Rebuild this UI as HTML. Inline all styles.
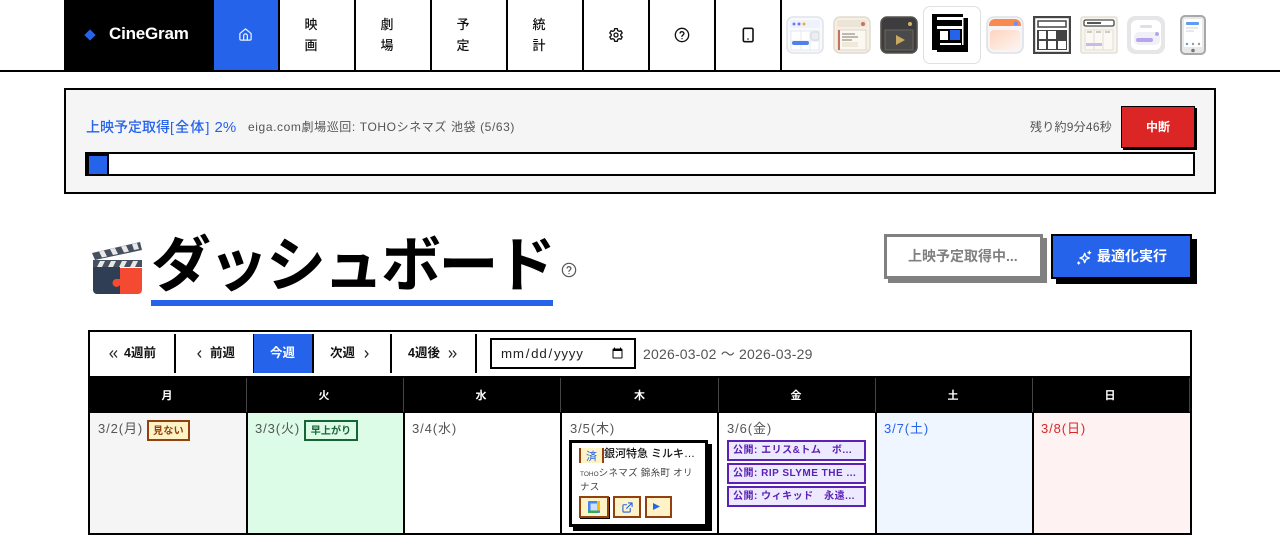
<!DOCTYPE html>
<html lang="ja"><head><meta charset="utf-8"><title>CineGram</title>
<style>
*{box-sizing:border-box}
html,body{margin:0;padding:0;width:1280px;height:535px;overflow:hidden;background:#fff}
body{position:relative;font-family:"Liberation Sans","Noto Sans CJK JP",sans-serif;color:#000}
.a{position:absolute}
.t{position:absolute;white-space:nowrap;line-height:1}
.c{display:flex;align-items:center;justify-content:center;position:absolute}
.sep{position:absolute;background:#000}
.nv{position:absolute;top:0;height:70px;text-align:center;font-size:13px;font-weight:500;line-height:21px;padding-top:14px;color:#111}
svg{display:block;position:absolute}
.ev{position:absolute;left:727px;width:139px;height:21px;border:2px solid #5b21b6;background:#ede9fe;color:#5b21b6;font-size:10px;font-weight:700;letter-spacing:.5px;line-height:17px;padding-left:4px;white-space:nowrap;overflow:hidden}
.ib{position:absolute;top:496px;height:22px;border:2px solid #92400e;background:#fef3c7}
.dt{position:absolute;top:422px;font-size:13px;line-height:14px;color:#555;letter-spacing:.9px;white-space:nowrap}
.hd{position:absolute;top:376px;height:37px;color:#fff;font-size:11px;font-weight:700;display:flex;align-items:center;justify-content:center}
.tb{position:absolute;top:347px;line-height:13px;font-size:12.5px;font-weight:700;color:#111;white-space:nowrap}
input::-webkit-datetime-edit{letter-spacing:.75px}
</style></head><body>

<!-- NAV -->
<div class="a" style="left:0;top:70px;width:1280px;height:2px;background:#000"></div>
<div class="a" style="left:64px;top:0;width:150px;height:70px;background:#000"></div>
<div class="a" style="left:86px;top:31px;width:8px;height:8px;background:#2563eb;transform:rotate(45deg)"></div>
<div class="t" style="left:109px;top:25px;font-size:17px;font-weight:700;color:#fff;letter-spacing:-.2px">CineGram</div>
<div class="a" style="left:214px;top:0;width:64px;height:70px;background:#2563eb"></div>
<svg style="left:238px;top:27px" width="15" height="15" viewBox="0 0 24 24" fill="none" stroke="#fff" stroke-width="2" stroke-linecap="round" stroke-linejoin="round" opacity=".9"><path d="M3 10.500 12 3l9 7.500V19a2 2 0 0 1-2 2H5a2 2 0 0 1-2-2z"/><path d="M9 21v-7a3 3 0 0 1 6 0v7"/></svg>
<div class="sep" style="left:278px;top:0;width:2px;height:70px"></div>
<div class="nv" style="left:280px;width:62px">映<br>画</div>
<div class="sep" style="left:354px;top:0;width:2px;height:70px"></div>
<div class="nv" style="left:356px;width:62px">劇<br>場</div>
<div class="sep" style="left:430px;top:0;width:2px;height:70px"></div>
<div class="nv" style="left:432px;width:62px">予<br>定</div>
<div class="sep" style="left:506px;top:0;width:2px;height:70px"></div>
<div class="nv" style="left:508px;width:62px">統<br>計</div>
<div class="sep" style="left:582px;top:0;width:2px;height:70px"></div>
<svg style="left:608px;top:27px" width="16" height="16" viewBox="0 0 24 24" fill="none" stroke="#111" stroke-width="2" stroke-linejoin="round"><path d="M10 2.500h4l.6 2.900 1.900 1.100 2.800-.9 2 3.400-2.200 2v2l2.200 2-2 3.400-2.800-.9-1.900 1.100-.6 2.900h-4l-.6-2.900-1.900-1.100-2.800.9-2-3.400 2.200-2v-2l-2.200-2 2-3.400 2.800.9 1.900-1.100z"/><circle cx="12" cy="12" r="3"/></svg>
<div class="sep" style="left:648px;top:0;width:2px;height:70px"></div>
<svg style="left:674px;top:27px" width="16" height="16" viewBox="0 0 24 24" fill="none" stroke="#111" stroke-width="2" stroke-linecap="round"><circle cx="12" cy="12" r="10"/><path d="M9.100 9a3 3 0 0 1 5.800 1c0 2-3 2.500-3 4"/><path d="M12 17.500h.01"/></svg>
<div class="sep" style="left:714px;top:0;width:2px;height:70px"></div>
<svg style="left:740px;top:27px" width="16" height="16" viewBox="0 0 24 24" fill="none" stroke="#111" stroke-width="2.400" stroke-linecap="round"><rect x="5" y="2" width="14.500" height="20" rx="2"/><path d="M12 18h.01"/></svg>
<div class="sep" style="left:780px;top:0;width:2px;height:70px"></div>

<!-- THEME ICONS -->
<svg style="left:786px;top:16px" width="38" height="38" viewBox="0 0 38 38"><rect x="1" y="1" width="36" height="36" rx="6" fill="#f7f9fd" stroke="#e1e4ea" stroke-width="1.600"/><rect x="4" y="4" width="30" height="8" rx="2" fill="#eef2fd"/><circle cx="8" cy="8" r="1.500" fill="#6d7ff0"/><circle cx="13" cy="8" r="1.500" fill="#7c6ee8"/><circle cx="18" cy="8" r="1.500" fill="#f5a83c"/><rect x="5" y="15" width="28" height="19" fill="#fff" stroke="#e6e8ee"/><path d="M15 15v19M5 25h28M24 15v19" stroke="#e6e8ee"/><rect x="25" y="16" width="8" height="8" rx="2" fill="#eceef2" stroke="#d5d8de"/><rect x="6" y="25" width="17" height="4" rx="2" fill="#4f80ec"/></svg>
<svg style="left:833px;top:16px" width="38" height="38" viewBox="0 0 38 38"><rect x="1" y="1" width="36" height="36" rx="6" fill="#f5efe4" stroke="#e2dccf" stroke-width="1.600"/><rect x="4" y="4" width="30" height="7" rx="2" fill="#ece4d6"/><circle cx="30" cy="8" r="2" fill="#c9705f"/><rect x="5" y="14" width="28" height="20" fill="#fbf8f1" stroke="#ddd6c8"/><rect x="5" y="14" width="2" height="20" fill="#c9705f"/><path d="M9 18h13M9 21h16M9 24h10" stroke="#9b9488" stroke-width="1.200"/><rect x="9" y="26" width="16" height="5" fill="#efe9dc"/></svg>
<svg style="left:880px;top:16px" width="38" height="38" viewBox="0 0 38 38"><rect x="1" y="1" width="36" height="36" rx="6" fill="#3d3d40" stroke="#56534d" stroke-width="1.600"/><circle cx="30" cy="8" r="2" fill="#d4b469"/><rect x="5" y="14" width="28" height="20" fill="#4a4a4b" stroke="#6b675f"/><path d="M16 19l9 5-9 5z" fill="#c9a95f"/></svg>
<div class="a" style="left:923px;top:6px;width:58px;height:58px;border:1px solid #e0e0e0;border-radius:7px;background:#fff"></div>
<svg style="left:932px;top:14px" width="37" height="38" viewBox="0 0 37 38"><rect x="0" y="0" width="31" height="36" fill="#000"/><rect x="5" y="4" width="31" height="34" fill="#000"/><rect x="5" y="3" width="25" height="3" fill="#fff"/><rect x="5" y="12" width="25" height="3" fill="#fff"/><rect x="30" y="3" width="1.500" height="28" fill="#fff"/><rect x="8" y="17" width="8" height="9" fill="#fff"/><rect x="18" y="16" width="10" height="10" fill="#2563eb"/><rect x="8" y="29" width="21" height="2" fill="#fff"/></svg>
<svg style="left:986px;top:16px" width="38" height="38" viewBox="0 0 38 38"><defs><linearGradient id="g1" x1="0" y1="0" x2="1" y2="1"><stop offset="0" stop-color="#fdd4c0"/><stop offset="1" stop-color="#fdf5f0"/></linearGradient></defs><rect x="1" y="1" width="36" height="36" rx="7" fill="#f5f5f7" stroke="#dfe1e6" stroke-width="1.600"/><path d="M3 9a6 6 0 0 1 6-6h20a6 6 0 0 1 6 6v1H3z" fill="#f98a50"/><circle cx="30" cy="7.500" r="2.200" fill="#6d93ef"/><rect x="4" y="14" width="30" height="20" rx="4" fill="url(#g1)"/></svg>
<svg style="left:1033px;top:16px" width="38" height="38" viewBox="0 0 38 38"><rect x="1" y="1" width="36" height="36" fill="#fff" stroke="#444" stroke-width="2.400"/><rect x="5" y="5" width="28" height="6" fill="#fff" stroke="#444" stroke-width="1.500"/><rect x="4" y="14" width="30" height="20" fill="#444"/><rect x="6" y="15" width="7" height="8" fill="#fff"/><rect x="15" y="15" width="8" height="8" fill="#fff"/><rect x="25" y="15" width="8" height="8" fill="#444"/><rect x="6" y="25" width="7" height="8" fill="#fff"/><rect x="15" y="25" width="8" height="8" fill="#fff"/><rect x="25" y="25" width="8" height="8" fill="#fff"/></svg>
<svg style="left:1080px;top:16px" width="38" height="38" viewBox="0 0 38 38"><rect x="1" y="1" width="36" height="36" rx="2" fill="#f7f5ee" stroke="#e3e0d6" stroke-width="1.600"/><rect x="4" y="4" width="30" height="6" rx="1.500" fill="#fff" stroke="#4a4a4a" stroke-width="1.300"/><rect x="7" y="6" width="14" height="2" fill="#555"/><rect x="5" y="14" width="28" height="20" fill="#faf9f4" stroke="#e3e0d6"/><path d="M14 14v20M23 14v20" stroke="#e0ddd3"/><path d="M7 16h5M16 16h5M25 16h5" stroke="#bdbab0" stroke-width="1.500"/><rect x="6" y="27" width="16" height="3" fill="#c4bde8"/></svg>
<svg style="left:1127px;top:16px" width="38" height="38" viewBox="0 0 38 38"><rect x="0" y="0" width="38" height="38" rx="8" fill="#e6e6e9"/><rect x="4" y="4" width="30" height="30" rx="6" fill="#fff"/><rect x="13" y="9" width="12" height="3" rx="1.500" fill="#e0e0e4"/><rect x="7" y="16" width="26" height="13" rx="5" fill="#f1f0f6"/><rect x="9" y="22" width="17" height="4" rx="2" fill="#b8a4ec"/><circle cx="30" cy="18" r="2" fill="#b8a4ec"/></svg>
<svg style="left:1180px;top:15px" width="26" height="40" viewBox="0 0 26 40"><rect x="1" y="1" width="24" height="38" rx="4" fill="#e8e8e8" stroke="#a8a8a8" stroke-width="2"/><rect x="4" y="4" width="18" height="28" fill="#fff"/><rect x="6" y="7" width="13" height="3" rx="1" fill="#5f9bf0"/><path d="M6 13h12M6 16h8" stroke="#d8dbe0" stroke-width="1.300"/><circle cx="7" cy="29" r="1.200" fill="#5f9bf0"/><circle cx="13" cy="29" r="1.200" fill="#999"/><circle cx="19" cy="29" r="1.200" fill="#999"/><circle cx="13" cy="35.500" r="1.800" fill="#777"/></svg>

<!-- PROGRESS -->
<div class="a" style="left:64px;top:88px;width:1152px;height:106px;border:2px solid #000;background:#f5f5f5"></div>
<div class="t" style="left:86px;top:120px;font-size:14px;font-weight:500;color:#2563eb">上映予定取得<span style="letter-spacing:1.200px">[全体]</span> <span style="font-size:15px">2%</span></div>
<div class="t" style="left:248px;top:121px;font-size:12px;color:#555;letter-spacing:.6px">eiga.com劇場巡回: TOHOシネマズ 池袋 (5/63)</div>
<div class="t" style="left:1030px;top:121px;font-size:12px;color:#555;letter-spacing:.25px">残り約9分46秒</div>
<div class="a" style="left:1121px;top:106px;width:74px;height:42px;background:#dc2626;border:1px solid #000;box-shadow:2px 2px 0 #000"></div>
<div class="c" style="left:1121px;top:105px;width:74px;height:42px;color:#fff;font-size:12px;font-weight:700">中断</div>
<div class="a" style="left:85px;top:152px;width:1110px;height:24px;border:2px solid #000;background:#fff"></div>
<div class="a" style="left:87px;top:154px;width:22px;height:20px;border:2px solid #000;border-bottom:0;background:#2563eb"></div>

<!-- TITLE -->
<svg style="left:91px;top:241px" width="54" height="55" viewBox="0 0 54 55"><path d="M1 12 49 1l2 8L4 19z" fill="#46505f"/><path d="M8 10.500l5-1 3 6-5 1zM19 8l5-1 3 6-5 1zM30 5.500l5-1 3 6-5 1zM41 3l5-1 2 6-5 1z" fill="#e8e8e8"/><rect x="2" y="19" width="49" height="7" fill="#46505f"/><path d="M6 26l3-6h5l-3 6zM17 26l3-6h5l-3 6zM28 26l3-6h5l-3 6zM39 26l3-6h5l-3 6z" fill="#e8e8e8"/><path d="M2 26h27v12a5 5 0 0 0 0 6v9H6a4 4 0 0 1-4-4z" fill="#2f3d55"/><path d="M29 27h22v22a4 4 0 0 1-4 4H29v-9a4 4 0 1 1-3-6l3 0z" fill="#f44a32"/></svg>
<div class="t" style="left:151px;top:223px;font-size:60px;font-weight:700;letter-spacing:-2.500px;line-height:76px;font-family:'Noto Sans CJK JP',sans-serif">ダッシュボード</div>
<div class="a" style="left:151px;top:300px;width:402px;height:6px;background:#2563eb"></div>
<svg style="left:561px;top:262px" width="16" height="16" viewBox="0 0 24 24" fill="none" stroke="#555" stroke-width="1.800" stroke-linecap="round"><circle cx="12" cy="12" r="10"/><path d="M9.100 9a3 3 0 0 1 5.800 1c0 2-3 2.500-3 4"/><path d="M12 17.500h.01"/></svg>

<div class="a" style="left:884px;top:234px;width:159px;height:45px;border:3px solid #808080;background:#fff;box-shadow:4px 4px 0 #808080"></div>
<div class="t" style="left:908px;top:249px;color:#808080;font-size:14px;font-weight:700">上映予定取得中...</div>
<div class="a" style="left:1051px;top:234px;width:141px;height:45px;border:2px solid #000;background:#2563eb;box-shadow:5px 5px 0 #000"></div>
<svg style="left:1076px;top:250px" width="16" height="16" viewBox="0 0 24 24" fill="none" stroke="#fff" stroke-width="2" stroke-linecap="round" stroke-linejoin="round"><path d="M13 5l2 5 5 2-5 2-2 5-2-5-5-2 5-2z"/><path d="M20 2v4M18 4h4M4 18v3M2.500 19.500h3"/></svg>
<div class="t" style="left:1097px;top:249px;font-size:14px;font-weight:700;color:#fff">最適化実行</div>

<!-- CALENDAR -->
<div class="a" style="left:88px;top:330px;width:1104px;height:205px;border:2px solid #000;border-bottom:0;background:#fff"></div>
<div class="a" style="left:90px;top:413px;width:156px;height:120px;background:#f5f5f5"></div>
<div class="a" style="left:248px;top:413px;width:155px;height:120px;background:#dcfce7"></div>
<div class="a" style="left:877px;top:413px;width:155px;height:120px;background:#eff6ff"></div>
<div class="a" style="left:1034px;top:413px;width:156px;height:120px;background:#fef2f2"></div>
<div class="sep" style="left:246px;top:413px;width:2px;height:122px"></div>
<div class="sep" style="left:403px;top:413px;width:2px;height:122px"></div>
<div class="sep" style="left:560px;top:413px;width:2px;height:122px"></div>
<div class="sep" style="left:717px;top:413px;width:2px;height:122px"></div>
<div class="sep" style="left:875px;top:413px;width:2px;height:122px"></div>
<div class="sep" style="left:1032px;top:413px;width:2px;height:122px"></div>
<div class="sep" style="left:88px;top:533px;width:1104px;height:2px"></div>

<svg style="left:109px;top:350px" width="9" height="8" viewBox="0 0 9 8" fill="none" stroke="#222" stroke-width="1.200"><path d="M4 .5 1 4l3 3.500M8 .5 5 4l3 3.500"/></svg>
<div class="tb" style="left:124px">4週前</div>
<div class="sep" style="left:174px;top:334px;width:2px;height:39px"></div>
<svg style="left:197px;top:350px" width="5" height="8" viewBox="0 0 5 8" fill="none" stroke="#222" stroke-width="1.300"><path d="M4 .5 1 4l3 3.500"/></svg>
<div class="tb" style="left:210px">前週</div>
<div class="a" style="left:253px;top:334px;width:61px;height:39px;background:#2563eb;border-left:1px solid #000;border-right:2px solid #000"></div>
<div class="tb" style="left:270px;color:#fff">今週</div>
<div class="tb" style="left:330px">次週</div>
<svg style="left:364px;top:350px" width="5" height="8" viewBox="0 0 5 8" fill="none" stroke="#222" stroke-width="1.300"><path d="M1 .5 4 4 1 7.500"/></svg>
<div class="sep" style="left:390px;top:334px;width:2px;height:39px"></div>
<div class="tb" style="left:408px">4週後</div>
<svg style="left:448px;top:350px" width="9" height="8" viewBox="0 0 9 8" fill="none" stroke="#222" stroke-width="1.200"><path d="M1 .5 4 4 1 7.500M5 .5 8 4 5 7.500"/></svg>
<div class="sep" style="left:475px;top:334px;width:2px;height:39px"></div>
<input type="date" style="position:absolute;left:490px;top:338px;width:146px;height:31px;border:2px solid #000;background:#fff;padding:0 8px;font:13.333px 'Liberation Sans',sans-serif;color:#222;border-radius:0;outline:0">
<div class="t" style="left:643px;top:347px;font-size:14px;color:#555;letter-spacing:.2px">2026-03-02 〜 2026-03-29</div>

<div class="a" style="left:90px;top:376px;width:1100px;height:37px;background:#000"></div>
<div class="a" style="left:88px;top:376px;width:1104px;height:2px;background:#000"></div>
<div class="hd" style="left:89px;width:156px">月</div>
<div class="hd" style="left:246px;width:156px">火</div>
<div class="hd" style="left:403px;width:156px">水</div>
<div class="hd" style="left:561px;width:157px">木</div>
<div class="hd" style="left:718px;width:156px">金</div>
<div class="hd" style="left:875px;width:156px">土</div>
<div class="hd" style="left:1032px;width:156px">日</div>
<div class="a" style="left:246px;top:378px;width:1px;height:34px;background:#444"></div>
<div class="a" style="left:403px;top:378px;width:1px;height:34px;background:#444"></div>
<div class="a" style="left:560px;top:378px;width:1px;height:34px;background:#444"></div>
<div class="a" style="left:718px;top:378px;width:1px;height:34px;background:#444"></div>
<div class="a" style="left:875px;top:378px;width:1px;height:34px;background:#444"></div>
<div class="a" style="left:1032px;top:378px;width:1px;height:34px;background:#444"></div>
<div class="a" style="left:1189px;top:378px;width:1px;height:34px;background:#444"></div>

<div class="dt" style="left:98px">3/2(月)</div>
<div class="c" style="left:147px;top:420px;width:43px;height:21px;border:2px solid #92400e;background:#fef3c7;color:#92400e;font-size:10px;font-weight:700;letter-spacing:.3px;padding-bottom:2px">見ない</div>
<div class="dt" style="left:255px">3/3(火)</div>
<div class="c" style="left:304px;top:420px;width:54px;height:21px;border:2px solid #166534;background:#dcfce7;color:#166534;font-size:10px;font-weight:700;letter-spacing:.1px;padding-bottom:2px">早上がり</div>
<div class="dt" style="left:412px">3/4(水)</div>
<div class="dt" style="left:570px">3/5(木)</div>
<div class="dt" style="left:727px">3/6(金)</div>
<div class="dt" style="left:884px;color:#2563eb">3/7(土)</div>
<div class="dt" style="left:1041px;color:#dc2626">3/8(日)</div>

<!-- EVENT CARD -->
<div class="a" style="left:569px;top:440px;width:139px;height:87px;border:3px solid #000;background:#fff;box-shadow:4px 4px 0 #000"></div>
<div class="c" style="left:579px;top:448px;width:25px;height:15px;background:#fef3c7;border-left:2px solid #92400e;border-right:2px solid #92400e;color:#2563eb;font-size:11px">済</div>
<div class="t" style="left:604px;top:449px;font-size:11px;font-weight:500;color:#111">銀河特急 ミルキ…</div>
<div class="a" style="left:580px;top:467px;width:125px;font-size:9.500px;line-height:13px;color:#444;letter-spacing:.3px;white-space:nowrap"><span style="font-size:6.500px;letter-spacing:0">TOHO</span>シネマズ 錦糸町 オリ<br>ナス</div>
<div class="ib" style="left:579px;width:30px;box-shadow:1px 1px 0 #000"></div>
<svg style="left:588px;top:501px" width="12" height="12" viewBox="0 0 12 12"><rect width="12" height="12" rx="1" fill="#4285f4"/><rect x="0" y="9.500" width="9" height="2.500" fill="#34a853"/><rect x="9" y="0" width="3" height="9.500" fill="#fbbc04"/><rect x="2.500" y="2.500" width="6.500" height="7" fill="#cfe0fb"/></svg>
<div class="ib" style="left:613px;width:28px"></div>
<svg style="left:622px;top:502px" width="11" height="11" viewBox="0 0 24 24" fill="none" stroke="#2563eb" stroke-width="2.400" stroke-linecap="round" stroke-linejoin="round"><path d="M18 14v6a2 2 0 0 1-2 2H4a2 2 0 0 1-2-2V8a2 2 0 0 1 2-2h6"/><path d="M14 2h8v8M22 2 10 14"/></svg>
<div class="ib" style="left:645px;width:27px"></div>
<svg style="left:653px;top:503px" width="7" height="7" viewBox="0 0 8 8"><path d="M0 0l8 4-8 4z" fill="#2563eb"/></svg>

<div class="ev" style="top:440px">公開: エリス&amp;トム　ボ...</div>
<div class="ev" style="top:463px">公開: RIP SLYME THE ...</div>
<div class="ev" style="top:486px">公開: ウィキッド　永遠...</div>
</body></html>
